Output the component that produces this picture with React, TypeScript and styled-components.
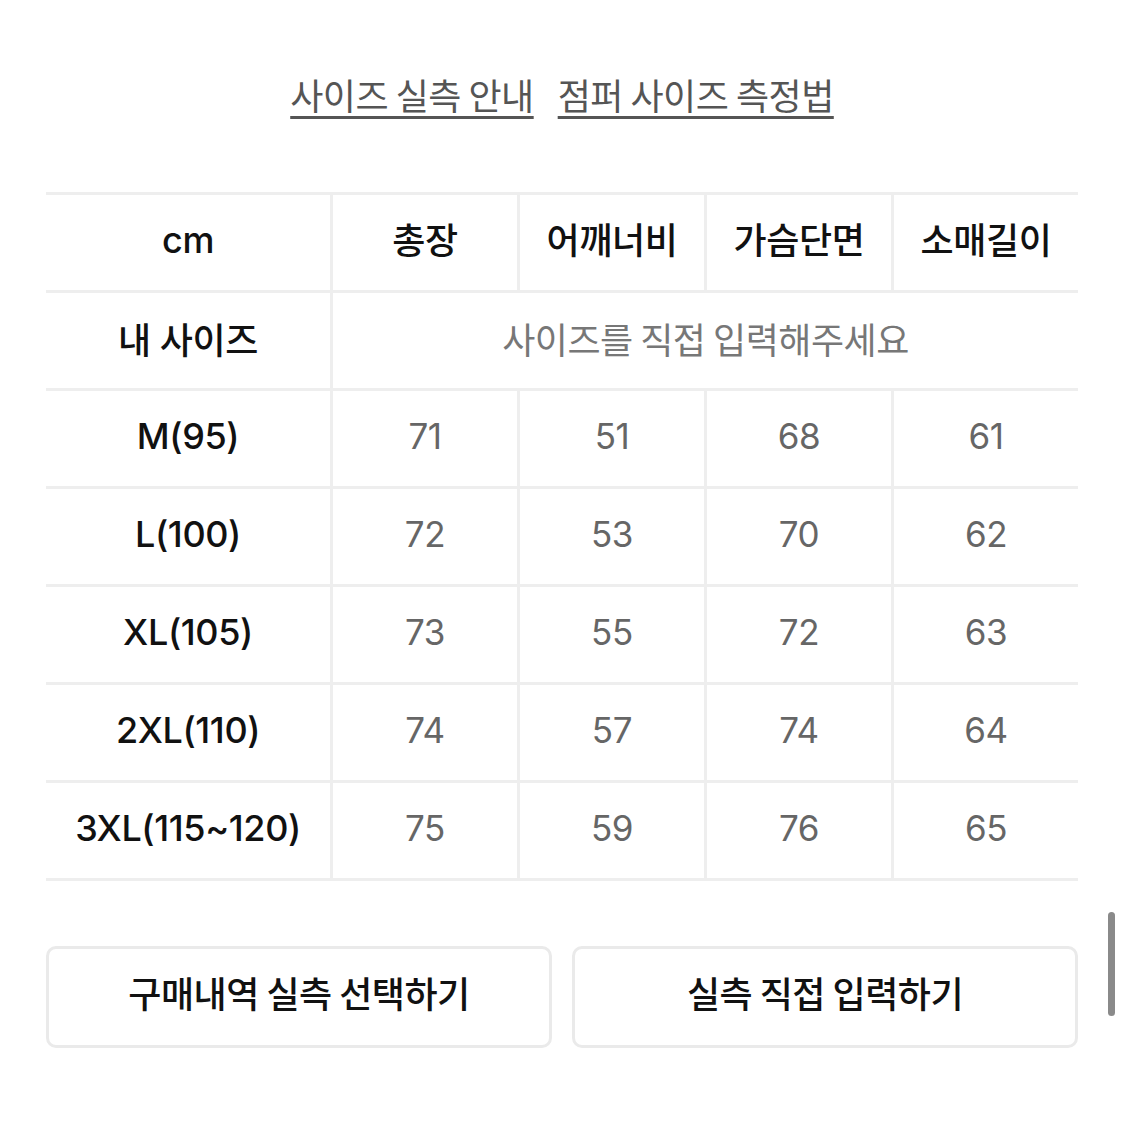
import React from 'react';
import styled, { createGlobalStyle } from 'styled-components';

const GlobalStyle = createGlobalStyle`
  html, body {
    margin: 0;
    padding: 0;
    background: #fff;
  }
  body {
    font-family: Inter, "Noto Sans CJK KR", sans-serif;
    color: #111;
  }
`;

const sizes = [
  { label: 'M(95)', values: [71, 51, 68, 61] },
  { label: 'L(100)', values: [72, 53, 70, 62] },
  { label: 'XL(105)', values: [73, 55, 72, 63] },
  { label: '2XL(110)', values: [74, 57, 74, 64] },
  { label: '3XL(115~120)', values: [75, 59, 76, 65] },
];

const headers = ['총장', '어깨너비', '가슴단면', '소매길이'];

const Page = styled.div`
  width: 1125px;
  height: 1125px;
  box-sizing: border-box;
  padding: 70px 47px 0 46px;
  position: relative;
  overflow: hidden;
`;

const Links = styled.div`
  display: flex;
  justify-content: center;
  gap: 24px;
  height: 50px;
`;

const GuideLink = styled.a`
  font-family: "Noto Sans CJK KR", sans-serif;
  font-size: 36px;
  line-height: 48px;
  color: #555;
  text-decoration: underline;
  text-decoration-thickness: 3px;
  text-underline-offset: 6px;
  letter-spacing: -0.5px;
  cursor: pointer;
`;

const Table = styled.div`
  margin-top: 72px;
  border-top: 3px solid #eeeeee;
`;

const Row = styled.div`
  display: grid;
  grid-template-columns: 284px repeat(4, 1fr);
  height: 98px;
  box-sizing: border-box;
  border-bottom: 3px solid #eeeeee;
`;

const Cell = styled.div<{ $head?: boolean; $first?: boolean; $span?: boolean }>`
  display: flex;
  align-items: center;
  justify-content: center;
  padding-bottom: ${(p) => (p.$head ? '10px' : '5px')};
  border-left: ${(p) => (p.$first ? 'none' : '3px solid #eeeeee')};
  grid-column: ${(p) => (p.$span ? 'span 4' : 'auto')};
  font-family: ${(p) =>
    p.$head ? '"Noto Sans CJK KR", sans-serif' : 'Inter, "Noto Sans CJK KR", sans-serif'};
  font-size: ${(p) => (p.$first || p.$head ? '36px' : '35px')};
  font-weight: ${(p) => (p.$first || p.$head ? 500 : 400)};
  color: ${(p) => (p.$head || p.$first ? '#111' : '#666')};
  letter-spacing: -0.4px;
`;

const Placeholder = styled.span`
  font-family: "Noto Sans CJK KR", sans-serif;
  font-size: 36px;
  color: #777;
  letter-spacing: -0.5px;
`;

const Buttons = styled.div`
  display: grid;
  grid-template-columns: 1fr 1fr;
  gap: 20px;
  margin-top: 65px;
`;

const Button = styled.button`
  height: 102px;
  padding: 0 0 10px;
  background: #fff;
  border: 3px solid #eaeaea;
  border-radius: 10px;
  font-family: "Noto Sans CJK KR", sans-serif;
  font-size: 36px;
  font-weight: 500;
  color: #111;
  letter-spacing: -0.5px;
  cursor: pointer;
`;

const ScrollThumb = styled.div`
  position: absolute;
  right: 10px;
  top: 912px;
  width: 7px;
  height: 104px;
  border-radius: 4px;
  background: #8a8a8a;
`;

export default function App() {
  return (
    <>
      <GlobalStyle />
      <Page>
        <Links>
          <GuideLink>사이즈 실측 안내</GuideLink>
          <GuideLink>점퍼 사이즈 측정법</GuideLink>
        </Links>
        <Table>
          <Row>
            <Cell $first>cm</Cell>
            {headers.map((h) => (
              <Cell key={h} $head>
                {h}
              </Cell>
            ))}
          </Row>
          <Row>
            <Cell $first>내 사이즈</Cell>
            <Cell $span>
              <Placeholder>사이즈를 직접 입력해주세요</Placeholder>
            </Cell>
          </Row>
          {sizes.map((s) => (
            <Row key={s.label}>
              <Cell $first>{s.label}</Cell>
              {s.values.map((v, i) => (
                <Cell key={i}>{v}</Cell>
              ))}
            </Row>
          ))}
        </Table>
        <Buttons>
          <Button>구매내역 실측 선택하기</Button>
          <Button>실측 직접 입력하기</Button>
        </Buttons>
        <ScrollThumb />
      </Page>
    </>
  );
}
